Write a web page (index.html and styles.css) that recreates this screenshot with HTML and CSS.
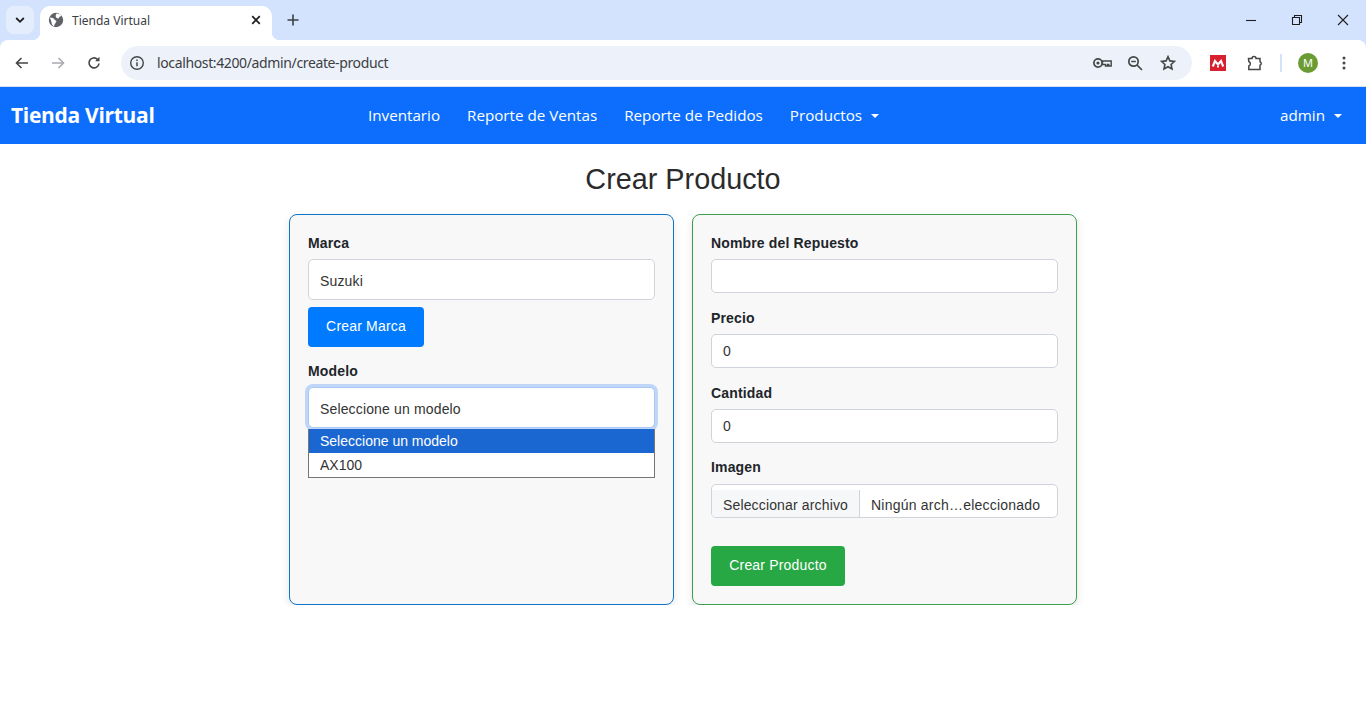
FILE: index.html
```html
<!DOCTYPE html>
<html lang="es">
<head>
  <meta charset="UTF-8">
  <title>Tienda Virtual</title>
  <link rel="stylesheet" href="styles.css">
</head>
<body>
  <!-- browser chrome -->
  <div class="browser">
    <div class="tabstrip">
      <button class="tab-search">
        <svg width="12" height="12" viewBox="0 0 12 12"><path d="M2.200 4l3.800 3.800L9.800 4" fill="none" stroke="#1f1f1f" stroke-width="1.800"/></svg>
      </button>
      <div class="tab">
        <svg class="favicon" width="16" height="16" viewBox="0 0 16 16"><circle cx="8" cy="8" r="7.200" fill="#5f6368"/><path d="M1.800 5.500l3.200.5 2 2 1.500 1-1 2-1 1.500-.5 2-2-2-1-4zM8.500 1.500l3.500.5 1.500 2-2 .8-1 1.700-2-.5-1-2z" fill="#fff"/></svg>
        <span class="tab-title">Tienda Virtual</span>
        <svg class="tab-close" width="10" height="10" viewBox="0 0 10 10"><path d="M1.200 1.200l7.600 7.600M8.800 1.200l-7.600 7.600" stroke="#1f1f1f" stroke-width="1.700"/></svg>
      </div>
      <svg class="new-tab" width="14" height="14" viewBox="0 0 14 14"><path d="M7 1.500v11M1.500 7h11" stroke="#3c4043" stroke-width="1.600"/></svg>
      <div class="window-btns">
        <svg width="12" height="12" viewBox="0 0 12 12"><path d="M1 6.500h10" stroke="#1f1f1f" stroke-width="1.100"/></svg>
        <svg width="12" height="12" viewBox="0 0 12 12"><path d="M1.500 3.500h7v7h-7zM3.500 3.500v-2h7v7h-2" fill="none" stroke="#1f1f1f" stroke-width="1.100"/></svg>
        <svg width="12" height="12" viewBox="0 0 12 12"><path d="M1 1l10 10M11 1L1 11" stroke="#1f1f1f" stroke-width="1.100"/></svg>
      </div>
    </div>
    <div class="toolbar">
      <svg class="tool-icon" width="16" height="16" viewBox="0 0 16 16"><path d="M14 8H3M7.500 3L2.500 8l5 5" fill="none" stroke="#444746" stroke-width="1.600"/></svg>
      <svg class="tool-icon" width="16" height="16" viewBox="0 0 16 16"><path d="M2 8h11M8.500 3l5 5-5 5" fill="none" stroke="#a8abaf" stroke-width="1.600"/></svg>
      <svg class="tool-icon" width="16" height="16" viewBox="0 0 16 16"><path d="M13 8.500A5 5 0 1 1 11.500 4.300" fill="none" stroke="#444746" stroke-width="1.600"/><path d="M13.500 1.800v4.400H9.100z" fill="#444746"/></svg>
      <div class="address">
        <span class="site-info">
          <svg width="16" height="16" viewBox="0 0 16 16"><circle cx="8" cy="8" r="6.300" fill="none" stroke="#444746" stroke-width="1.400"/><path d="M8 7.200v4M8 4.600v1.400" stroke="#444746" stroke-width="1.500"/></svg>
        </span>
        <span class="url">localhost:4200/admin/create-product</span>
        <div class="address-icons">
          <svg class="icon-key" width="19" height="12" viewBox="0 0 19 12"><circle cx="5" cy="6" r="4.100" fill="none" stroke="#444746" stroke-width="1.700"/><circle cx="5" cy="6" r="1.600" fill="#444746"/><path d="M9.500 4h8.700v5h-2.400V7.500h-1.300V9h-2V7.500h-3z" fill="none" stroke="#444746" stroke-width="1.400"/></svg>
          <svg class="icon-zoom" width="16" height="16" viewBox="0 0 16 16"><circle cx="6.500" cy="6.500" r="4.700" fill="none" stroke="#444746" stroke-width="1.700"/><path d="M10 10l5 5M4.200 6.500h4.600" stroke="#444746" stroke-width="1.700"/></svg>
          <svg width="16" height="16" viewBox="0 0 16 16"><path d="M8 1.700l1.900 4.200 4.600.5-3.400 3.100.9 4.500L8 11.700l-4 2.300.9-4.500L1.500 6.400l4.600-.5z" fill="none" stroke="#444746" stroke-width="1.600"/></svg>
        </div>
      </div>
      <div class="ext-mendeley">
        <svg width="16" height="16" viewBox="0 0 16 16"><rect width="16" height="16" fill="#d9202f"/><path d="M2.800 11.500L5 6l3 3.500L11 6l2.200 5.500" fill="none" stroke="#fff" stroke-width="2.100"/><circle cx="8" cy="11.600" r="1.100" fill="#fff"/></svg>
      </div>
      <svg class="ext-puzzle" width="16" height="16" viewBox="0 0 16 16"><path d="M1.500 3.500h3.500a2 2 0 0 1 4 0h4v3.300a1.800 1.800 0 0 1 0 3.400v4.300H1.800V11a2.400 2.400 0 0 0 0-4.500z" fill="none" stroke="#444746" stroke-width="1.500"/></svg>
      <span class="tool-sep"></span>
      <span class="avatar">M</span>
      <svg class="kebab" width="4" height="14" viewBox="0 0 4 14"><circle cx="2" cy="2" r="1.500" fill="#444746"/><circle cx="2" cy="7" r="1.500" fill="#444746"/><circle cx="2" cy="12" r="1.500" fill="#444746"/></svg>
    </div>
  </div>

  <!-- app navbar -->
  <nav class="navbar">
    <a class="brand">Tienda Virtual</a>
    <ul class="nav-links">
      <li>Inventario</li>
      <li>Reporte de Ventas</li>
      <li>Reporte de Pedidos</li>
      <li class="dropdown-toggle">Productos</li>
    </ul>
    <div class="nav-user dropdown-toggle">admin</div>
  </nav>

  <main class="page">
    <h2 class="page-title">Crear Producto</h2>
    <div class="cards">
      <form class="card card-blue">
        <div class="field-tight">
          <label>Marca</label>
          <div class="control control-tall">Suzuki</div>
        </div>
        <button type="button" class="btn btn-blue">Crear Marca</button>
        <div class="field-model">
          <label>Modelo</label>
          <div class="select-wrap">
            <div class="control control-tall control-focus">Seleccione un modelo</div>
            <ul class="select-menu">
              <li class="selected">Seleccione un modelo</li>
              <li>AX100</li>
            </ul>
          </div>
        </div>
      </form>

      <form class="card card-green">
        <div class="field">
          <label>Nombre del Repuesto</label>
          <div class="control"></div>
        </div>
        <div class="field">
          <label>Precio</label>
          <div class="control">0</div>
        </div>
        <div class="field">
          <label>Cantidad</label>
          <div class="control">0</div>
        </div>
        <div class="field field-image">
          <label>Imagen</label>
          <div class="file-control">
            <span class="file-btn">Seleccionar archivo</span>
            <span class="file-name">Ningún arch…eleccionado</span>
          </div>
        </div>
        <button type="button" class="btn btn-green">Crear Producto</button>
      </form>
    </div>
  </main>
</body>
</html>
```
FILE: styles.css
```css
* {
  box-sizing: border-box;
}

body {
  margin: 0;
  background: #fff;
  color: #212529;
  font-family: "Liberation Sans", Arial, sans-serif;
  font-size: 14px;
  letter-spacing: 0.15px;
}

ul {
  margin: 0;
  padding: 0;
  list-style: none;
}

/* browser chrome */
.browser {
  background: #d3e3fd;
  letter-spacing: 0;
}

.tabstrip {
  height: 40px;
  display: flex;
  align-items: flex-end;
  padding-left: 6px;
  position: relative;
}

.tab-search {
  width: 28px;
  height: 28px;
  margin-bottom: 6px;
  border: none;
  border-radius: 8px;
  background: #e4edfc;
  display: flex;
  align-items: center;
  justify-content: center;
  padding: 0;
}

.tab {
  width: 232px;
  height: 34px;
  margin-left: 6px;
  padding: 0 10px 6px 8px;
  background: #fff;
  border-radius: 10px 10px 0 0;
  display: flex;
  align-items: center;
  position: relative;
  z-index: 1;
}

.tab::before,
.tab::after {
  content: "";
  position: absolute;
  bottom: 0;
  width: 8px;
  height: 8px;
  background: radial-gradient(circle at 0 0, #d3e3fd 8px, #fff 8.5px);
}

.tab::before {
  left: -8px;
}

.tab::after {
  right: -8px;
  transform: scaleX(-1);
}

.favicon {
  flex: none;
}

.tab-title {
  margin-left: 8px;
  flex: 1;
  font-family: "Noto Sans", sans-serif;
  font-size: 12px;
  color: #3c4043;
}

.tab-close {
  margin-right: 1px;
}

.new-tab {
  margin: 0 0 13px 14px;
}

.window-btns {
  margin-left: auto;
  align-self: center;
  display: flex;
  gap: 34px;
  padding-right: 17px;
}

.toolbar {
  height: 47px;
  background: #fff;
  border-radius: 8px 8px 0 0;
  border-bottom: 1px solid #d5dfee;
  display: flex;
  align-items: center;
  padding: 0 14px 1px 14px;
  position: relative;
}

.tool-icon {
  flex: none;
  margin-right: 20px;
}

.tool-icon:nth-of-type(3) {
  margin-right: 19px;
}

.address {
  width: 1071px;
  height: 34px;
  padding: 0 16px 0 8px;
  border-radius: 17px;
  background: #edf2fa;
  display: flex;
  align-items: center;
}

.site-info {
  width: 16px;
  height: 16px;
  display: flex;
}

.url {
  margin-left: 12px;
  font-family: "Noto Sans", sans-serif;
  font-size: 14px;
  letter-spacing: -0.37px;
  color: #3c4043;
}

.address-icons {
  margin-left: auto;
  display: flex;
  align-items: center;
}

.icon-key {
  margin-right: 15px;
}

.icon-zoom {
  margin-right: 17px;
}

.ext-mendeley {
  width: 16px;
  height: 16px;
  margin-left: 18px;
  display: flex;
}

.ext-puzzle {
  margin-left: 21px;
}

.tool-sep {
  width: 2px;
  height: 18px;
  margin-left: 17px;
  background: #d3e3fd;
}

.avatar {
  width: 20px;
  height: 20px;
  margin-left: 16px;
  border-radius: 50%;
  background: #6b9c33;
  color: #fff;
  font-family: "Noto Sans", sans-serif;
  font-size: 11px;
  display: flex;
  align-items: center;
  justify-content: center;
}

.kebab {
  margin-left: 24px;
}

/* navbar */
.navbar {
  height: 57px;
  padding: 0 24px 2px 11px;
  background: #0d6efd;
  color: #fff;
  display: flex;
  align-items: center;
  font-family: "Open Sans", sans-serif;
  font-size: 15.2px;
  letter-spacing: 0;
}

.brand {
  width: 357px;
  font-size: 21px;
  font-weight: 700;
  letter-spacing: -0.3px;
}

.nav-links {
  display: flex;
  gap: 27px;
}

.nav-user {
  margin-left: auto;
}

.dropdown-toggle::after {
  content: "";
  display: inline-block;
  margin-left: 9px;
  vertical-align: 3px;
  border-top: 4.800px solid #fff;
  border-left: 4.800px solid transparent;
  border-right: 4.800px solid transparent;
}

/* page */
.page-title {
  margin: 17px 0;
  font-size: 28.8px;
  font-weight: 400;
  line-height: 36px;
  letter-spacing: 0;
  text-align: center;
  color: #2b2b2b;
}

.cards {
  display: flex;
  justify-content: center;
  gap: 18px;
}

.card {
  width: 385px;
  height: 391px;
  padding: 18px;
  background: #f8f8f9;
  border: 1px solid;
  border-radius: 8px;
  box-shadow: 0 4px 10px rgba(0, 0, 0, 0.1);
}

.card-blue {
  border-color: #0f75c9;
}

.card-green {
  border-color: #3c9f50;
}

label {
  display: block;
  margin-bottom: 5px;
  font-weight: 700;
  line-height: 21px;
  color: #212529;
}

.field {
  margin-bottom: 15px;
}

.field-image label {
  margin-top: -1px;
  margin-bottom: 6px;
}

.field-tight {
  margin-bottom: 7px;
}

.field-model {
  margin-top: 14px;
}

.control {
  height: 34px;
  padding: 0 11px;
  background: #fff;
  border: 1px solid #ced4da;
  border-radius: 5px;
  display: flex;
  align-items: center;
  color: #333;
}

.control-tall {
  height: 41px;
  padding-top: 2px;
}

.control-focus {
  border-color: #a9c9f2;
  box-shadow: 0 0 0 3px #bfd6f8;
}

.select-wrap {
  position: relative;
}

.select-menu {
  position: absolute;
  top: 42px;
  left: 0;
  right: 0;
  background: #fff;
  border: 1px solid #767676;
  border-top: none;
  color: #333;
  line-height: 24px;
  letter-spacing: 0;
}

.select-menu li {
  padding-left: 11px;
}

.select-menu .selected {
  background: #1a67d2;
  color: #fff;
}

.file-control {
  height: 34px;
  background: #fff;
  border: 1px solid #ced4da;
  border-radius: 5px;
  display: flex;
  overflow: hidden;
  color: #333;
}

.file-btn {
  margin-top: 5px;
  padding: 7px 11px 0;
  background: #f6f7f8;
  border-right: 1px solid #ced4da;
}

.file-name {
  padding: 12px 0 0 11px;
  letter-spacing: 0.22px;
}

.btn {
  height: 40px;
  padding: 0 0 2px;
  border: none;
  border-radius: 4px;
  color: #fff;
  font-family: inherit;
  font-size: 14px;
  letter-spacing: 0.18px;
}

.btn-blue {
  width: 116px;
  background: #007bff;
}

.btn-green {
  width: 134px;
  margin-top: 13px;
  background: #28a745;
}
```
